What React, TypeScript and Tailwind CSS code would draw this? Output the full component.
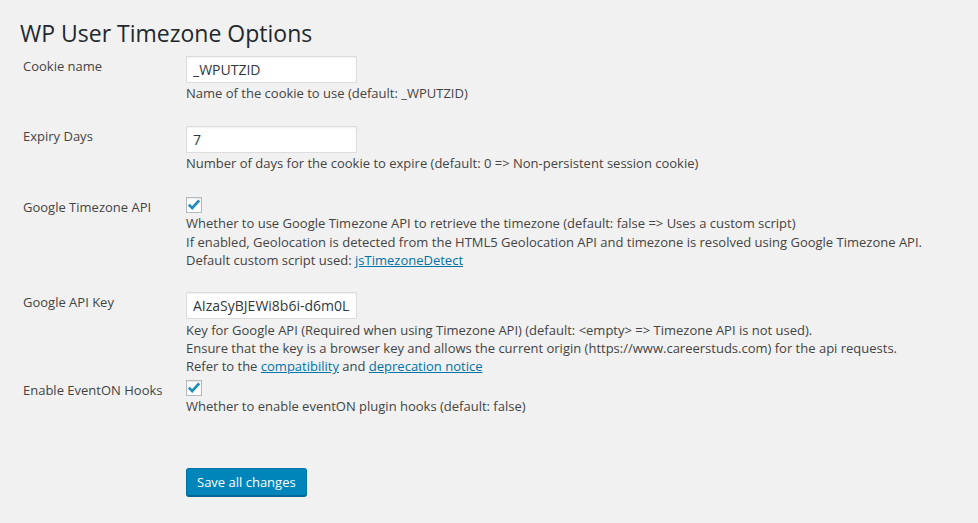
function Check() {
  return (
    <span className="relative block h-4 w-4 border border-[#b4b9be] bg-white shadow-[inset_0_1px_2px_rgba(0,0,0,0.1)]">
      <svg viewBox="0 0 16 16" className="absolute -left-px -top-px h-4 w-4">
        <polyline points="2.8,7.6 6.2,11 13.2,3.4" fill="none" stroke="#1e8cbe" strokeWidth="2.7" />
      </svg>
    </span>
  )
}

function TextInput({ value }: { value: string }) {
  return (
    <input
      type="text"
      defaultValue={value}
      className="block h-[27px] w-[171px] border border-[#ddd] bg-white px-[6px] text-[14px] text-[#32373c] shadow-[inset_0_1px_2px_rgba(0,0,0,0.07)] outline-none"
    />
  )
}

function Row({ label, className, children }: { label: string; className?: string; children: React.ReactNode }) {
  return (
    <div className={"flex " + (className || "")}>
      <div className="w-[163px] shrink-0 pt-px">{label}</div>
      <div>{children}</div>
    </div>
  )
}

const link = "text-[#0073aa] underline"

export default function App() {
  return (
    <div className="min-h-screen bg-[#f1f1f1] font-['Open_Sans',sans-serif] text-[13px] leading-[18.2px] text-[#444]">
      <h2 className="pl-5 pt-[18px] text-[23px] leading-[30px] font-normal text-[#23282d]">WP User Timezone Options</h2>

      <div className="pl-[23px]">
        <Row label="Cookie name" className="mt-2">
          <TextInput value="_WPUTZID" />
          <p className="mt-px">Name of the cookie to use (default: _WPUTZID)</p>
        </Row>

        <Row label="Expiry Days" className="mt-6">
          <TextInput value="7" />
          <p className="mt-px">Number of days for the cookie to expire (default: 0 =&gt; Non-persistent session cookie)</p>
        </Row>

        <Row label="Google Timezone API" className="mt-[25px]">
          <Check />
          <p className="mt-px">Whether to use Google Timezone API to retrieve the timezone (default: false =&gt; Uses a custom script)</p>
          <p>If enabled, Geolocation is detected from the HTML5 Geolocation API and timezone is resolved using Google Timezone API.</p>
          <p>
            Default custom script used: <a className={link}>jsTimezoneDetect</a>
          </p>
        </Row>

        <Row label="Google API Key" className="mt-[23px]">
          <TextInput value="AIzaSyBJEWi8b6i-d6m0LIkQ3xT" />
          <p className="mt-[2px]">Key for Google API (Required when using Timezone API) (default: &lt;empty&gt; =&gt; Timezone API is not used).</p>
          <p>Ensure that the key is a browser key and allows the current origin (https://www.careerstuds.com) for the api requests.</p>
          <p>
            Refer to the <a className={link}>compatibility</a> and <a className={link}>deprecation notice</a>
          </p>
        </Row>

        <Row label="Enable EventON Hooks" className="mt-1">
          <Check />
          <p className="mt-px">Whether to enable eventON plugin hooks (default: false)</p>
        </Row>

        <div className="mt-[53px] pl-[163px]">
          <button className="h-[28px] rounded-[3px] border border-[#0073aa] border-b-[#006799] bg-[#0085ba] px-[10px] text-[13px] text-white shadow-[0_1px_0_#006799]">
            Save all changes
          </button>
        </div>
      </div>
    </div>
  )
}
